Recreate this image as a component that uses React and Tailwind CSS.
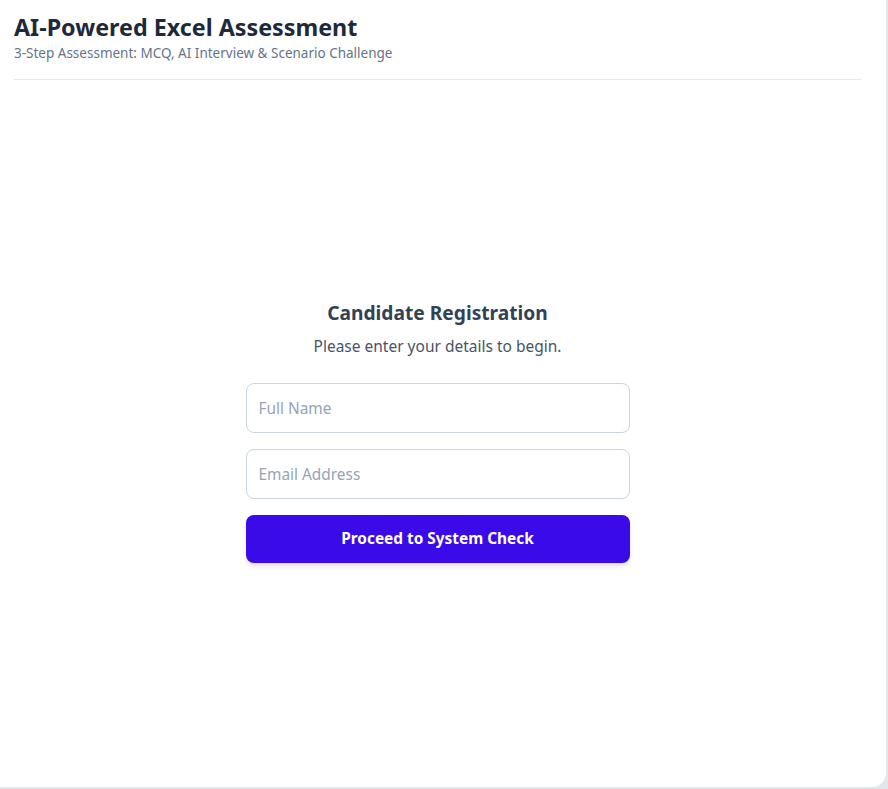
export default function App() {
  return (
    <div className="w-[888px] h-[789px] bg-[#e3e7eb] overflow-hidden" style={{ fontFamily: '"Noto Sans", "Open Sans", sans-serif' }}>
      <div className="w-[886px] h-[787px] bg-white rounded-br-[14px] flex flex-col pl-[14px] pr-[25px]">
        <header className="pt-[11px] pb-[16px] border-b border-[#e2e8f0]">
          <h1 className="text-[23.3px] leading-8 font-bold text-[#1e293b]">AI-Powered Excel Assessment</h1>
          <p className="text-[13.5px] leading-5 text-[#64748b]">3-Step Assessment: MCQ, AI Interview &amp; Scenario Challenge</p>
        </header>
        <main className="flex-1 flex items-center justify-center pb-[5px]">
          <div className="w-[384px] flex flex-col items-center">
            <h2 className="text-[19.2px] leading-7 font-bold text-[#334155]">Candidate Registration</h2>
            <p className="mt-[7px] text-[15.5px] leading-6 text-[#475569]">Please enter your details to begin.</p>
            <form className="mt-[25px] w-full flex flex-col gap-4" onSubmit={(e) => e.preventDefault()}>
              <input
                type="text"
                placeholder="Full Name"
                className="w-full h-[50px] px-3 rounded-lg border border-[#cbd5e1] text-[15.4px] text-[#1e293b] placeholder:text-[#94a3b8] outline-none"
              />
              <input
                type="email"
                placeholder="Email Address"
                className="w-full h-[50px] px-3 rounded-lg border border-[#cbd5e1] text-[15.4px] text-[#1e293b] placeholder:text-[#94a3b8] outline-none"
              />
              <button
                type="submit"
                className="w-full h-[48px] rounded-lg bg-[#3a0be8] text-white text-[15.4px] font-bold shadow-md"
              >
                Proceed to System Check
              </button>
            </form>
          </div>
        </main>
      </div>
    </div>
  );
}
